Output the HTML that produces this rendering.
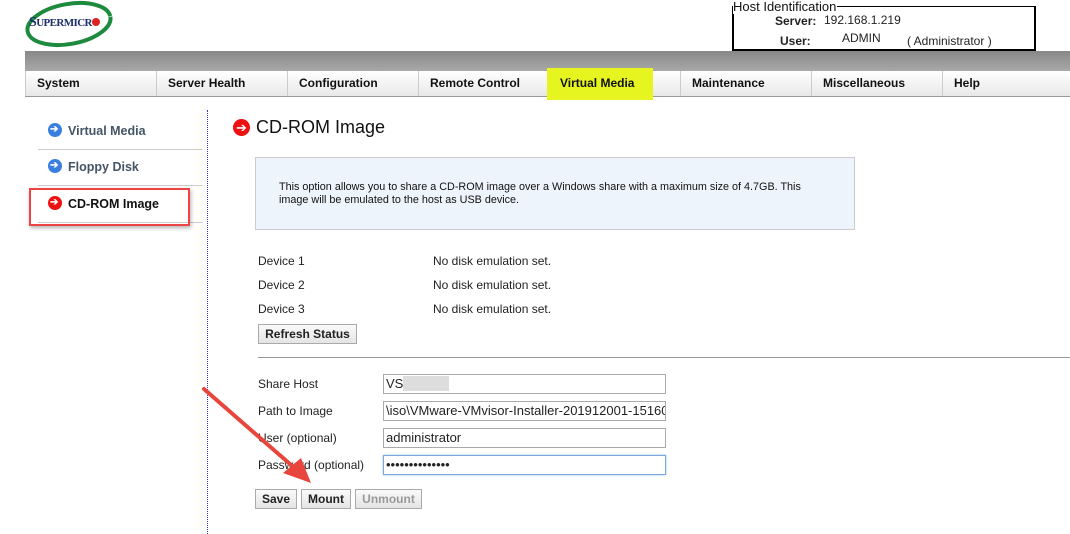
<!DOCTYPE html>
<html><head><style>
body{margin:0;width:1070px;height:534px;background:#fff;font-family:"Liberation Sans",Arial,sans-serif;position:relative;overflow:hidden;font-size:12px;color:#222}
.a{position:absolute}
.tab{position:absolute;top:71px;height:25px;width:131px;border-left:1px solid #ccc;font-weight:bold;font-size:12px;line-height:25px;padding-left:11px;box-sizing:border-box;color:#111}
.side{position:absolute;left:38px;width:165px;height:35px;border-bottom:1px solid #ccc;font-weight:bold;font-size:12.5px;color:#456;line-height:35px}
.ic{display:inline-block;width:14px;height:14px;border-radius:50%;vertical-align:-2px;margin:0 6px 0 10px;position:relative}
.ic:after{content:"➔";position:absolute;color:#fff;font-size:10px;line-height:14px;left:2px;top:0}
.lbl{position:absolute;font-size:12px;color:#222}
.inp{position:absolute;left:383px;width:283px;height:20px;border:1px solid #aaa;box-sizing:border-box;font-size:13px;line-height:18px;padding-left:2px;background:#fff;overflow:hidden;white-space:nowrap}
.btn{position:absolute;height:20px;border:1px solid #aaa;background:linear-gradient(#fafafa,#e4e4e4);font-weight:bold;font-size:12px;line-height:18px;text-align:center;box-sizing:border-box}
</style></head><body>
<svg class="a" style="left:0;top:0" width="130" height="50"><ellipse cx="69" cy="24" rx="42" ry="20" fill="none" stroke="#1e8a3e" stroke-width="4" stroke-dasharray="200 30" transform="rotate(-10 69 24)"/></svg>
<div class="a" style="left:29px;top:15px;font-family:'Liberation Serif',serif;font-size:14px;font-weight:bold;color:#1a2f6b;letter-spacing:-0.6px">S<span style="font-size:11px">UPERMICR</span><span style="display:inline-block;width:8px;height:8px;border-radius:50%;background:#d22"></span></div>

<div class="a" style="left:732px;top:6px;width:300px;height:42px;border:2px solid #000;border-top-width:1px"></div>
<div class="a" style="left:733px;top:-1px;background:#fff;font-size:13px;color:#111;padding-right:1px">Host Identification</div>
<div class="a" style="left:775px;top:14px;font-weight:bold;font-size:12px">Server:</div>
<div class="a" style="left:824px;top:13px;font-size:12px">192.168.1.219</div>
<div class="a" style="left:780px;top:34px;font-weight:bold;font-size:12px">User:</div>
<div class="a" style="left:842px;top:31px;font-size:12px">ADMIN</div>
<div class="a" style="left:907px;top:34px;font-size:12px">( Administrator )</div>

<div class="a" style="left:25px;top:51px;width:1045px;height:20px;background:linear-gradient(#888,#a8a8a8)"></div>
<div class="a" style="left:25px;top:71px;width:1045px;height:25px;background:linear-gradient(#fff,#e8e8e8);border-bottom:1px solid #999"></div>
<div class="tab" style="left:25px">System</div>
<div class="tab" style="left:156px">Server Health</div>
<div class="tab" style="left:287px">Configuration</div>
<div class="tab" style="left:418px">Remote Control</div>
<div class="a" style="left:547px;top:68px;width:106px;height:32px;background:#e6f51f"></div>
<div class="tab" style="left:549px;border-left:none;padding-left:11px">Virtual Media</div>
<div class="tab" style="left:680px">Maintenance</div>
<div class="tab" style="left:811px">Miscellaneous</div>
<div class="tab" style="left:942px">Help</div>

<div class="side" style="top:114px;left:38px"><span class="ic" style="background:#3a7fe0;margin-left:10px"></span>Virtual Media</div>
<div class="side" style="top:150px"><span class="ic" style="background:#3a7fe0"></span>Floppy Disk</div>
<div class="side" style="top:187px;color:#111"><span class="ic" style="background:#e11"></span>CD-ROM Image</div>
<div class="a" style="left:29px;top:188px;width:157px;height:34px;border:2px solid #e44;box-shadow:1px 2px 4px rgba(0,0,0,.3)"></div>
<div class="a" style="left:207px;top:110px;height:424px;border-left:1px dotted #33c"></div>

<div class="a" style="left:233px;top:119px;width:17px;height:17px;border-radius:50%;background:#e11;color:#fff;font-size:13px;line-height:17px;text-align:center">➔</div>
<div class="a" style="left:256px;top:117px;font-size:18px;color:#111">CD-ROM Image</div>
<div class="a" style="left:255px;top:157px;width:600px;height:73px;background:#eef4fc;border:1px solid #ccc;box-sizing:border-box"></div>
<div class="a" style="left:279px;top:181px;font-size:10.8px;color:#111;line-height:13px;width:540px">This option allows you to share a CD-ROM image over a Windows share with a maximum size of 4.7GB. This image will be emulated to the host as USB device.</div>

<div class="lbl" style="left:258px;top:254px">Device 1</div><div class="lbl" style="left:433px;top:254px">No disk emulation set.</div>
<div class="lbl" style="left:258px;top:278px">Device 2</div><div class="lbl" style="left:433px;top:278px">No disk emulation set.</div>
<div class="lbl" style="left:258px;top:302px">Device 3</div><div class="lbl" style="left:433px;top:302px">No disk emulation set.</div>
<div class="btn" style="left:258px;top:324px;width:99px">Refresh Status</div>
<div class="a" style="left:258px;top:357px;width:812px;border-top:1px solid #999"></div>

<div class="lbl" style="left:258px;top:377px">Share Host</div>
<div class="lbl" style="left:258px;top:404px">Path to Image</div>
<div class="lbl" style="left:258px;top:431px">User (optional)</div>
<div class="lbl" style="left:258px;top:458px">Password (optional)</div>
<div class="inp" style="top:374px">VS<span style="background:#ddd;color:#ddd">xxxxxxx</span></div>
<div class="inp" style="top:401px">\iso\VMware-VMvisor-Installer-201912001-15160</div>
<div class="inp" style="top:428px">administrator</div>
<div class="inp" style="top:455px;border:1px solid #7aa7e0;box-shadow:0 0 2px #9bd">••••••••••••••</div>
<div class="btn" style="left:255px;top:489px;width:42px">Save</div>
<div class="btn" style="left:301px;top:489px;width:50px">Mount</div>
<div class="btn" style="left:355px;top:489px;width:67px;color:#999">Unmount</div>

<svg class="a" style="left:0;top:0" width="1070" height="534"><line x1="204" y1="389" x2="298" y2="471" stroke="#e8453c" stroke-width="4" stroke-linecap="round"/><polygon points="311,483 283,473 301,458" fill="#e8453c"/></svg>
</body></html>
